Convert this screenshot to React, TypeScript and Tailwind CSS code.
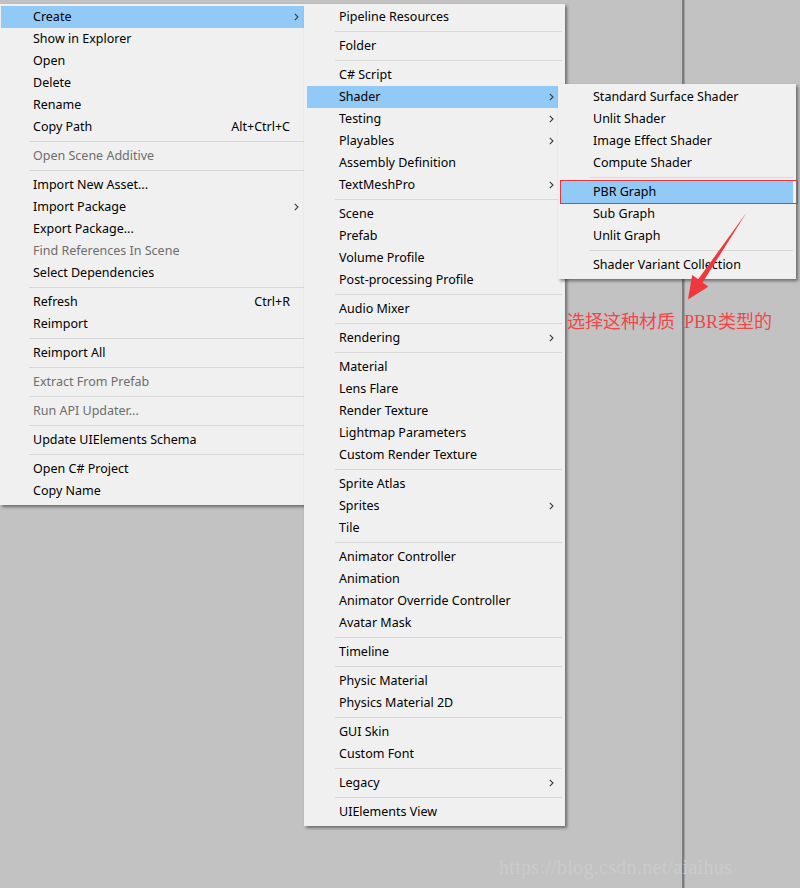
import React from 'react';

type Entry = { label: string; shortcut?: string; sub?: boolean; disabled?: boolean; active?: boolean };
type Item = Entry | 'sep';

const assetMenu: Item[] = [
  { label: 'Create', sub: true, active: true },
  { label: 'Show in Explorer' },
  { label: 'Open' },
  { label: 'Delete' },
  { label: 'Rename' },
  { label: 'Copy Path', shortcut: 'Alt+Ctrl+C' },
  'sep',
  { label: 'Open Scene Additive', disabled: true },
  'sep',
  { label: 'Import New Asset...' },
  { label: 'Import Package', sub: true },
  { label: 'Export Package...' },
  { label: 'Find References In Scene', disabled: true },
  { label: 'Select Dependencies' },
  'sep',
  { label: 'Refresh', shortcut: 'Ctrl+R' },
  { label: 'Reimport' },
  'sep',
  { label: 'Reimport All' },
  'sep',
  { label: 'Extract From Prefab', disabled: true },
  'sep',
  { label: 'Run API Updater...', disabled: true },
  'sep',
  { label: 'Update UIElements Schema' },
  'sep',
  { label: 'Open C# Project' },
  { label: 'Copy Name' },
];

const createMenu: Item[] = [
  { label: 'Pipeline Resources' },
  'sep',
  { label: 'Folder' },
  'sep',
  { label: 'C# Script' },
  { label: 'Shader', sub: true, active: true },
  { label: 'Testing', sub: true },
  { label: 'Playables', sub: true },
  { label: 'Assembly Definition' },
  { label: 'TextMeshPro', sub: true },
  'sep',
  { label: 'Scene' },
  { label: 'Prefab' },
  { label: 'Volume Profile' },
  { label: 'Post-processing Profile' },
  'sep',
  { label: 'Audio Mixer' },
  'sep',
  { label: 'Rendering', sub: true },
  'sep',
  { label: 'Material' },
  { label: 'Lens Flare' },
  { label: 'Render Texture' },
  { label: 'Lightmap Parameters' },
  { label: 'Custom Render Texture' },
  'sep',
  { label: 'Sprite Atlas' },
  { label: 'Sprites', sub: true },
  { label: 'Tile' },
  'sep',
  { label: 'Animator Controller' },
  { label: 'Animation' },
  { label: 'Animator Override Controller' },
  { label: 'Avatar Mask' },
  'sep',
  { label: 'Timeline' },
  'sep',
  { label: 'Physic Material' },
  { label: 'Physics Material 2D' },
  'sep',
  { label: 'GUI Skin' },
  { label: 'Custom Font' },
  'sep',
  { label: 'Legacy', sub: true },
  'sep',
  { label: 'UIElements View' },
];

const shaderMenu: Item[] = [
  { label: 'Standard Surface Shader' },
  { label: 'Unlit Shader' },
  { label: 'Image Effect Shader' },
  { label: 'Compute Shader' },
  'sep',
  { label: 'PBR Graph', active: true },
  { label: 'Sub Graph' },
  { label: 'Unlit Graph' },
  'sep',
  { label: 'Shader Variant Collection' },
];

const Chevron = () => (
  <svg width="5" height="8" viewBox="0 0 5 8" className="shrink-0">
    <path d="M0.8 0.8 L4 4 L0.8 7.2" fill="none" stroke="#3c3c3c" strokeWidth="1.1" />
  </svg>
);

const Menu: React.FC<{ items: Item[]; className: string; chevronGap?: string }> = ({ items, className, chevronGap = 'mr-[8px]' }) => (
  <div className={`absolute bg-[#f0f0f0] pt-[2px] pb-[3px] shadow-[2px_2px_3px_rgba(0,0,0,0.45)] ${className}`}>
    {items.map((it, i) =>
      it === 'sep' ? (
        <div key={i} className="h-[7px] pt-[3px] pl-[28px]">
          <div className="h-px bg-[#d7d7d7]" />
        </div>
      ) : (
        <div
          key={i}
          className={`h-[22px] flex items-center pl-[32px] ${it.active ? 'bg-[#91c9f7]' : ''}`}
        >
          <span className={`flex-1 whitespace-nowrap ${it.disabled ? 'text-[#6d6d6d]' : 'text-black'}`}>{it.label}</span>
          {it.shortcut && <span className="mr-[15px] text-black whitespace-nowrap">{it.shortcut}</span>}
          {it.sub && <span className={`${chevronGap} flex items-center`}><Chevron /></span>}
        </div>
      )
    )}
  </div>
);

export default function App() {
  return (
    <div className="relative w-[800px] h-[888px] overflow-hidden bg-[#c2c2c2] flex text-[12.5px] font-['Noto_Sans',sans-serif]">
      {/* editor panes behind the menus */}
      <div className="w-[682px] h-full" />
      <div className="w-[2px] h-full bg-[#7d7d7d]" />
      <div className="w-[1px] h-full bg-[#9e9e9e]" />
      <div className="flex-1 h-full" />

      <Menu items={assetMenu} className="left-0 top-[4px] w-[306px] px-[1px] z-10" chevronGap="mr-[6px]" />
      <Menu items={createMenu} className="left-[304px] top-[4px] w-[261px] px-[3px] z-20" />
      <Menu items={shaderMenu} className="left-[558px] top-[84px] w-[238px] pl-[3px] pr-[3px] z-30" />

      {/* annotation */}
      <div className="absolute left-[560px] top-[180px] w-[238px] h-[24px] border border-[#e8343a] z-40" />
      <svg className="absolute left-[680px] top-[205px] z-40" width="75" height="100" viewBox="680 205 75 100">
        <polygon
          points="746.6,212.4 702.6,282.4 708.4,286.8 688,299.6 692.2,275 698.2,279.2"
          fill="#f0383c"
        />
      </svg>
      <div className="absolute left-[567px] top-[310px] z-40 whitespace-pre text-[18px] leading-[24px] text-[#f0474a] font-['Liberation_Serif','Noto_Sans_CJK_SC',serif]">
        选择这种材质  PBR类型的
      </div>
      <div className="absolute left-[499px] top-[853px] z-40 whitespace-nowrap text-[20px] leading-[28px] text-[#cbcbcb] font-['Liberation_Serif',serif] tracking-[0.3px]">
        https://blog.csdn.net/aiaihus
      </div>
    </div>
  );
}
